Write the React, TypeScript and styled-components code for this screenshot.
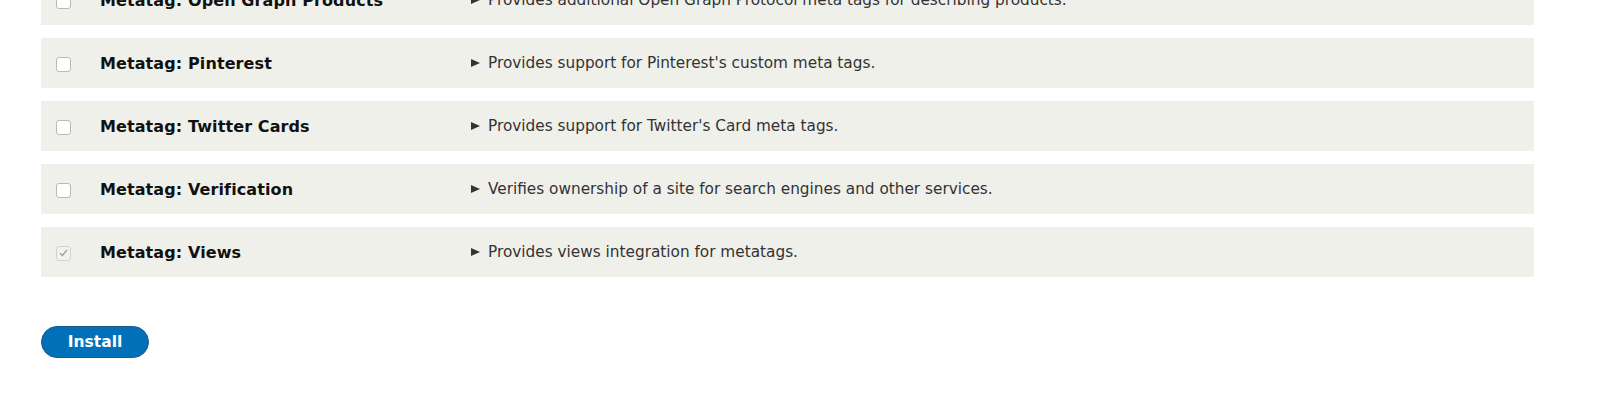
import React from "react";
import styled, { createGlobalStyle } from "styled-components";

const Global = createGlobalStyle`
  html, body { margin: 0; padding: 0; background: #fff; }
  body { font-family: "DejaVu Sans", Verdana, sans-serif; color: #222; }
`;

const Page = styled.div`
  padding: 0 66px 0 41px;
`;

const List = styled.div`
  display: flex;
  flex-direction: column;
  gap: 13px;
  margin-top: -25px;
`;

const Row = styled.div`
  display: grid;
  grid-template-columns: 59px 371px 1fr;
  align-items: center;
  height: 50px;
  background: #f0f0eb;
`;

const Check = styled.span<{ $checked?: boolean }>`
  justify-self: start;
  margin-left: 15px;
  margin-top: 2px;
  width: 15px;
  height: 15px;
  box-sizing: border-box;
  border: 1px solid ${(p) => (p.$checked ? "#d2d2d2" : "#b9b9b9")};
  border-radius: 3px;
  background: ${(p) => (p.$checked ? "#f1f1f1" : "#fff")};
  display: flex;
  align-items: center;
  justify-content: center;
`;

const Name = styled.span`
  font-weight: bold;
  font-size: 16px;
  color: #111;
  letter-spacing: 0.1px;
`;

const Desc = styled.span`
  font-size: 15.3px;
  color: #333;
  display: flex;
  align-items: center;
  gap: 8px;
`;

const Arrow = styled.span`
  width: 0;
  height: 0;
  border-top: 4.5px solid transparent;
  border-bottom: 4.5px solid transparent;
  border-left: 9px solid #333;
`;

const Actions = styled.div`
  padding: 49px 0 0;
`;

const Button = styled.button`
  height: 32px;
  width: 108px;
  border-radius: 20px;
  border: 1px solid #1e5c90;
  background: #0071b8;
  color: #fff;
  font-family: "DejaVu Sans", Verdana, sans-serif;
  font-weight: bold;
  font-size: 15.5px;
  padding: 0;
  cursor: pointer;
`;

const modules = [
  { name: "Metatag: Open Graph Products", desc: "Provides additional Open Graph Protocol meta tags for describing products.", checked: false },
  { name: "Metatag: Pinterest", desc: "Provides support for Pinterest's custom meta tags.", checked: false },
  { name: "Metatag: Twitter Cards", desc: "Provides support for Twitter's Card meta tags.", checked: false },
  { name: "Metatag: Verification", desc: "Verifies ownership of a site for search engines and other services.", checked: false },
  { name: "Metatag: Views", desc: "Provides views integration for metatags.", checked: true },
];

export default function App() {
  return (
    <>
      <Global />
      <Page>
        <List>
          {modules.map((m) => (
            <Row key={m.name}>
              <Check $checked={m.checked}>
                {m.checked && (
                  <svg width="9" height="8" viewBox="0 0 9 8">
                    <path d="M1 4.2 L3.4 6.5 L8 1" fill="none" stroke="#9a9a9a" strokeWidth="1.2" />
                  </svg>
                )}
              </Check>
              <Name>{m.name}</Name>
              <Desc>
                <Arrow />
                {m.desc}
              </Desc>
            </Row>
          ))}
        </List>
        <Actions>
          <Button>Install</Button>
        </Actions>
      </Page>
    </>
  );
}
